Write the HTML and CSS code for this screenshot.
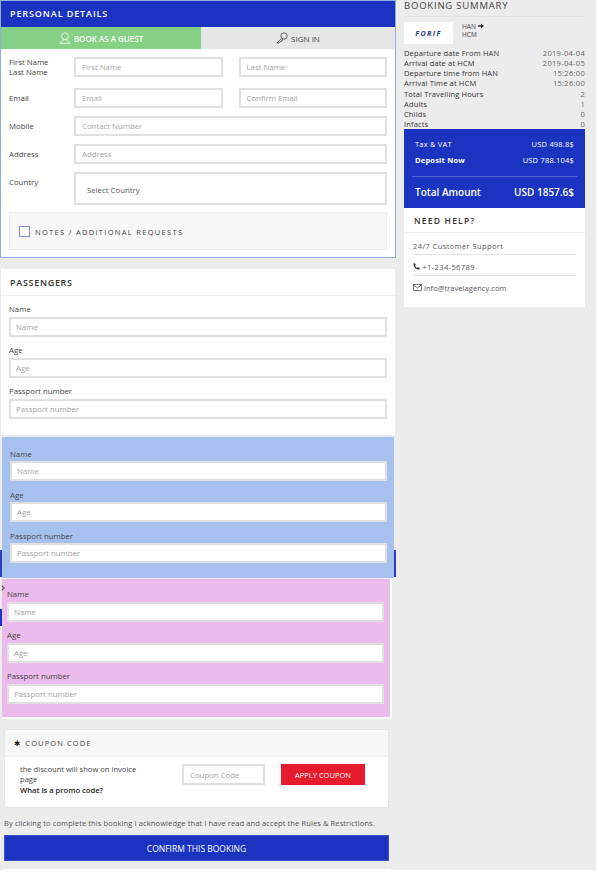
FILE: index.html
```html
<!DOCTYPE html>
<html lang="en">
<head>
  <meta charset="UTF-8" />
  <title>Booking</title>
  <link rel="stylesheet" href="styles.css">
</head>
<body>
<div class="page">
  <div class="left">

    <div class="card personal">
      <h2 class="bar-title">PERSONAL DETAILS</h2>
      <div class="tabs">
        <div class="tab tab-guest">
          <svg width="12" height="12" viewBox="0 0 12 12" fill="none" stroke="#fff" stroke-width="0.8"><circle cx="6" cy="4.2" r="3.4"/><path d="M4.5 7.5 C4.5 9 3.5 9.6 1.5 10.2 L1 11.3 H11 L10.5 10.2 C8.5 9.6 7.5 9 7.5 7.5"/></svg>
          BOOK AS A GUEST
        </div>
        <div class="tab tab-signin">
          <svg width="12" height="12" viewBox="0 0 12 12" fill="none" stroke="#444" stroke-width="0.8"><circle cx="8" cy="4" r="3.2"/><path d="M5.7 6.3 L1 11 H3 L3.5 10 H4.5 L5 9 H6 L6.8 7"/></svg>
          SIGN IN
        </div>
      </div>
      <div class="details">
        <div class="row row-first">
          <label class="row-label">First Name<br>Last Name</label>
          <div class="pair">
            <input class="field" placeholder="First Name">
            <input class="field" placeholder="Last Name">
          </div>
        </div>
        <div class="row">
          <label class="row-label">Email</label>
          <div class="pair">
            <input class="field" placeholder="Email">
            <input class="field" placeholder="Confirm Email">
          </div>
        </div>
        <div class="row">
          <label class="row-label">Mobile</label>
          <input class="field" placeholder="Contact Number">
        </div>
        <div class="row">
          <label class="row-label">Address</label>
          <input class="field" placeholder="Address">
        </div>
        <div class="row row-country">
          <label class="row-label">Country</label>
          <div class="select-box">Select Country</div>
        </div>
        <div class="notes">
          <span class="check"></span>
          <span>NOTES / ADDITIONAL REQUESTS</span>
        </div>
      </div>
    </div>

    <div class="card passengers">
      <h3 class="card-title">PASSENGERS</h3>
      <div class="people">
        <label class="field-label">Name</label>
        <input class="field" placeholder="Name">
        <label class="field-label">Age</label>
        <input class="field" placeholder="Age">
        <label class="field-label">Passport number</label>
        <input class="field" placeholder="Passport number">
      </div>
    </div>

    <div class="people people-blue">
      <label class="field-label">Name</label>
      <input class="field" placeholder="Name">
      <label class="field-label">Age</label>
      <input class="field" placeholder="Age">
      <label class="field-label">Passport number</label>
      <input class="field" placeholder="Passport number">
    </div>

    <div class="people people-pink">
      <label class="field-label">Name</label>
      <input class="field" placeholder="Name">
      <label class="field-label">Age</label>
      <input class="field" placeholder="Age">
      <label class="field-label">Passport number</label>
      <input class="field" placeholder="Passport number">
    </div>

    <div class="coupon">
      <div class="coupon-head"><span class="star">&#10033;</span> COUPON CODE</div>
      <div class="coupon-body">
        <div class="coupon-text">
          the discount will show on invoice page<br>
          <b>What is a promo code?</b>
        </div>
        <input class="field coupon-input" placeholder="Coupon Code">
        <button class="apply">APPLY COUPON</button>
      </div>
    </div>

    <p class="terms">By clicking to complete this booking I acknowledge that I have read and accept the Rules &amp; Restrictions.</p>
    <button class="confirm">CONFIRM THIS BOOKING</button>
    <div class="tail"></div>
  </div>

  <div class="right">
    <h3 class="summary-title">BOOKING SUMMARY</h3>
    <div class="flight">
      <div class="logo">FORIF</div>
      <div class="route">
        HAN <svg width="6" height="6" viewBox="0 0 6 6" fill="#333"><path d="M0 2.2 H3 V0.5 L6 3 L3 5.5 V3.8 H0 Z"/></svg><br>HCM
      </div>
    </div>
    <ul class="facts">
      <li><span>Departure date From HAN</span><span>2019-04-04</span></li>
      <li><span>Arrival date at HCM</span><span>2019-04-05</span></li>
      <li><span>Departure time from HAN</span><span>15:26:00</span></li>
      <li><span>Arrival Time at HCM</span><span>15:26:00</span></li>
      <li><span>Total Travelling Hours</span><span>2</span></li>
      <li><span>Adults</span><span>1</span></li>
      <li><span>Childs</span><span>0</span></li>
      <li><span>Infacts</span><span>0</span></li>
    </ul>
    <div class="totals">
      <div class="total-row"><span>Tax &amp; VAT</span><span>USD 498.8$</span></div>
      <div class="total-row total-deposit"><b>Deposit Now</b><span>USD 788.104$</span></div>
      <div class="total-row total-amount"><span>Total Amount</span><span>USD 1857.6$</span></div>
    </div>
    <div class="help">
      <h4 class="help-title">NEED HELP?</h4>
      <ul class="help-list">
        <li>24/7 Customer Support</li>
        <li>
          <svg width="7" height="7" viewBox="0 0 7 7" fill="#333"><path d="M0.5 0.5 L2 0.2 L2.8 2 L2 2.8 C2.5 3.8 3.2 4.5 4.2 5 L5 4.2 L6.8 5 L6.5 6.5 C3 6.8 0.2 4 0.5 0.5 Z"/></svg>
          +1-234-56789
        </li>
        <li class="help-mail">
          <svg width="9" height="7" viewBox="0 0 9 7" fill="none" stroke="#444" stroke-width="0.7"><rect x="0.4" y="0.4" width="8.2" height="6.2"/><path d="M0.4 0.8 L4.5 4 L8.6 0.8"/></svg>
          info@travelagency.com
        </li>
      </ul>
    </div>
  </div>
</div>
</body>
</html>
```

FILE: styles.css
```css
* {
  box-sizing: border-box;
}
body {
  margin: 0;
  background: #fff;
  font-family: "Open Sans", sans-serif;
  font-size: 8px;
  color: #444;
}
.page {
  position: relative;
  z-index: 0;
  display: flex;
  width: 596px;
  height: 870px;
  background: #ececec;
}
.left {
  width: 396px;
  flex: none;
}
.right {
  width: 181px;
  margin-left: 8px;
  flex: none;
}

/* shared bits */
.card {
  background: #fff;
}
.field {
  display: block;
  width: 100%;
  height: 20px;
  padding: 0 6px;
  border: 2px solid #e0e0e0;
  background: #fff;
  font-family: inherit;
  font-size: 7.8px;
  color: #444;
  outline: none;
}
.field::placeholder {
  color: #a3a3a3;
}
.field-label {
  display: block;
  height: 10px;
  line-height: 10px;
  font-size: 7.8px;
  color: #444;
}

/* personal details */
.personal {
  height: 258px;
  border: 1px solid #8fb0dc;
}
.bar-title {
  margin: 0;
  height: 26px;
  padding-left: 9px;
  background: #1a33c0;
  color: #fff;
  font-size: 9px;
  font-weight: 600;
  line-height: 26px;
  letter-spacing: 0.9px;
}
.tabs {
  display: flex;
  height: 22px;
}
.tab {
  display: flex;
  align-items: center;
  justify-content: center;
  gap: 3px;
  font-size: 8px;
}
.tab-guest {
  width: 200px;
  background: #84d084;
  color: #fff;
  font-weight: 600;
}
.tab-signin {
  flex: 1;
  background: #e6e6e6;
  color: #444;
}
.details {
  padding: 8px 8px 0;
}
.row {
  display: flex;
  align-items: flex-start;
  margin-bottom: 8px;
}
.row-first {
  height: 20px;
  margin-bottom: 11px;
}
.row-label {
  width: 65px;
  flex: none;
  padding-top: 5px;
  font-size: 7.8px;
  line-height: 10px;
}
.row-first .row-label {
  padding-top: 0;
}
.pair {
  flex: 1;
  display: flex;
  gap: 16px;
}
.pair .field {
  flex: 1;
  min-width: 0;
}
.select-box {
  flex: 1;
  height: 33px;
  padding-left: 11px;
  border: 2px solid #e0e0e0;
  font-size: 7.8px;
  line-height: 32px;
  color: #555;
}
.row-country {
  margin-bottom: 7px;
}
.notes {
  display: flex;
  align-items: center;
  gap: 5px;
  height: 38px;
  padding: 1px 0 0 9px;
  background: #f7f7f7;
  border: 1px solid #eee;
  letter-spacing: 1.3px;
  color: #444;
  font-size: 7.5px;
}
.check {
  width: 11px;
  height: 11px;
  background: #fff;
  border: 1px solid #7f8fdc;
}

/* passengers */
.passengers {
  margin-top: 11px;
  margin-left: 1px;
  width: 394px;
  height: 166px;
}
.card-title {
  margin: 0;
  height: 27px;
  padding-left: 9px;
  border-bottom: 1px solid #f0f0f0;
  color: #333;
  font-size: 9px;
  font-weight: 600;
  line-height: 27px;
  letter-spacing: 0.7px;
}
.people {
  padding: 8px 8px 0;
}
.people .field {
  margin-bottom: 8px;
  padding: 0 5px;
}
.people .field-label {
  margin-bottom: 3px;
}
.people-blue,
.people-pink {
  position: relative;
  margin-left: 2px;
}
.people-blue {
  width: 392px;
  height: 141px;
  margin-top: 2px;
  padding: 12px 7px 0 8px;
  background: #a7c1ef;
}
.people-blue .field-label {
  margin-bottom: 2px;
}
.people-blue .field {
  margin-bottom: 9px;
}
/* confirm button peeking out behind the blue block */
.people-blue::before {
  content: "";
  position: absolute;
  z-index: -1;
  left: -2px;
  right: -2px;
  top: 113px;
  height: 27px;
  background: #2a3fc4;
}
.people-pink {
  width: 390px;
  height: 140px;
  margin-top: 1px;
  padding: 10px 6px 0 5px;
  background: #ebbbeb;
  border-right: 2px solid #fff;
  border-bottom: 2px solid #fff;
}
.people-pink::before {
  content: "";
  position: absolute;
  left: -2px;
  top: 30px;
  width: 2px;
  height: 17px;
  background: #1a33c0;
}
.people-pink::after {
  content: "";
  position: absolute;
  left: -2px;
  top: 7px;
  width: 3px;
  height: 3px;
  border-top: 1px solid #555;
  border-right: 1px solid #555;
  transform: rotate(45deg);
}

/* coupon */
.coupon {
  width: 385px;
  height: 79px;
  margin: 10px 0 0 4px;
  background: #fff;
  border: 1px solid #e6e6e6;
}
.coupon-head {
  height: 27px;
  padding-left: 9px;
  background: #f7f7f7;
  border-bottom: 1px solid #eee;
  font-size: 7.5px;
  line-height: 26px;
  letter-spacing: 1.1px;
  color: #444;
}
.star {
  margin-right: 2px;
  color: #222;
  font-family: "DejaVu Sans", sans-serif;
  letter-spacing: 0;
}
.coupon-body {
  display: flex;
  align-items: flex-start;
  padding: 7px 0 0 15px;
}
.coupon-text {
  width: 162px;
  flex: none;
  padding-right: 38px;
  font-size: 7.6px;
  line-height: 10.3px;
}
.coupon-text b {
  color: #222;
  font-weight: 600;
}
.coupon-input {
  width: 83px;
  height: 21px;
  flex: none;
}
.apply {
  width: 84px;
  height: 21px;
  margin-left: 16px;
  padding: 0;
  border: none;
  background: #e61c2d;
  color: #fff;
  font-family: inherit;
  font-size: 7.5px;
}
.terms {
  margin: 10px 0 6px 4px;
  width: 392px;
  height: 11px;
  line-height: 11px;
  font-size: 7.5px;
  letter-spacing: 0.11px;
  white-space: nowrap;
  color: #555;
}
.confirm {
  display: block;
  width: 385px;
  height: 26px;
  margin-left: 4px;
  padding: 0;
  border: 1px solid #3a50d0;
  background: #1a33c0;
  color: #fff;
  font-family: inherit;
  font-size: 8.5px;
}
.tail {
  width: 388px;
  height: 5px;
  margin: 8px 0 0 3px;
  background: #fff;
}

/* booking summary */
.summary-title {
  margin: 0;
  height: 17px;
  border-bottom: 1px solid #e2e2e2;
  color: #444;
  font-size: 9.5px;
  font-weight: 400;
  line-height: 11px;
  letter-spacing: 0.8px;
}
.flight {
  display: flex;
  gap: 9px;
  margin-top: 5px;
  height: 26px;
}
.logo {
  width: 49px;
  height: 22px;
  background: #fff;
  color: #24389c;
  font-size: 7px;
  font-weight: 700;
  font-style: italic;
  line-height: 23px;
  text-align: center;
  letter-spacing: 1.5px;
}
.route {
  padding-top: 1px;
  font-size: 6.5px;
  line-height: 8px;
  color: #444;
}
.facts {
  list-style: none;
  margin: 0;
  padding: 0;
}
.facts li {
  display: flex;
  justify-content: space-between;
  height: 10.15px;
  line-height: 10.15px;
  font-size: 7.5px;
  letter-spacing: 0.15px;
  color: #333;
}
.facts li span:last-child {
  color: #666;
  letter-spacing: 0.3px;
}
.totals {
  height: 79px;
  padding: 9px 11px 0;
  background: #1a33c0;
  color: #fff;
}
.total-row {
  display: flex;
  justify-content: space-between;
  height: 12px;
  line-height: 12px;
  font-size: 7.5px;
  letter-spacing: 0.2px;
}
.total-deposit {
  margin-top: 4px;
}
.total-amount {
  height: 25px;
  margin: 10px -3px 0;
  padding: 8px 3px 0;
  border-top: 1px solid #4c62d4;
  line-height: 14px;
  font-size: 10px;
  font-weight: 600;
  letter-spacing: 0;
}
.help {
  height: 99px;
  background: #fff;
}
.help-title {
  margin: 0;
  height: 25px;
  padding-left: 10px;
  border-bottom: 1px solid #eee;
  color: #333;
  font-size: 8.5px;
  font-weight: 600;
  line-height: 25px;
  letter-spacing: 1.2px;
}
.help-list {
  list-style: none;
  margin: 0 9px;
  padding: 1px 0 0;
}
.help-list li {
  height: 21px;
  border-bottom: 1px solid #e2e2e2;
  line-height: 25px;
  letter-spacing: 0.4px;
  color: #555;
  font-size: 7.5px;
}
.help-list .help-mail {
  border-bottom: none;
  letter-spacing: 0.05px;
}
```
